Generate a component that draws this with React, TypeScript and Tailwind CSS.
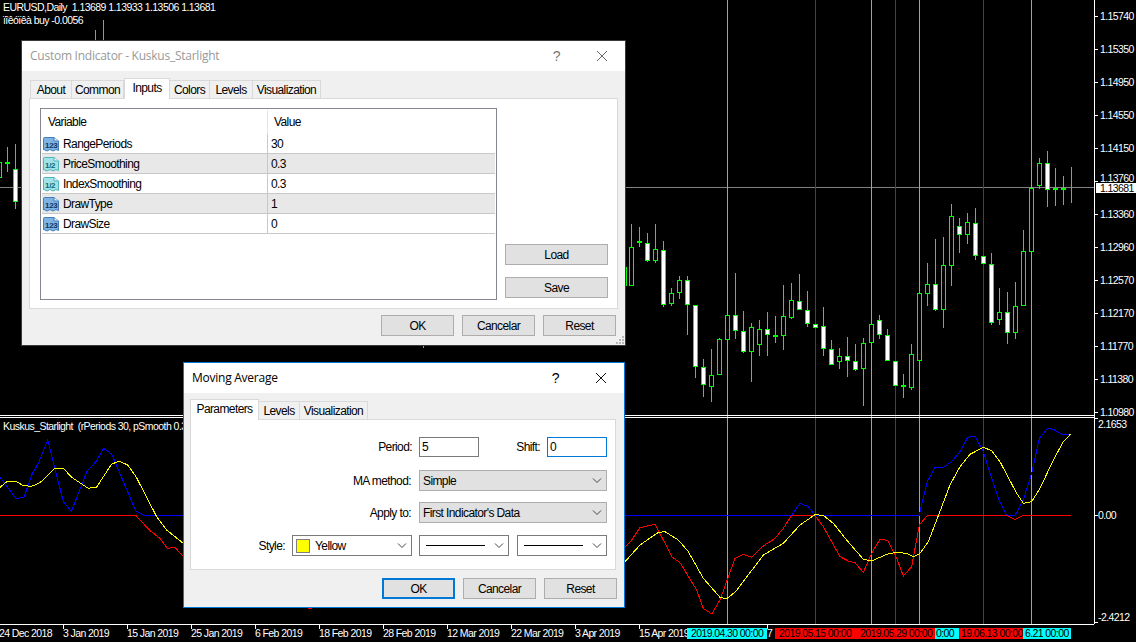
const FONT = "font-['Liberation_Sans',sans-serif]";
const TITLE = "font-['Open_Sans',sans-serif] tracking-[-0.25px]";

// [x, wickTop, wickBottom, bodyTop, bodyBottom, filled] read off the main pane
type Candle = [number, number, number, number, number, boolean];

const raw: [number, number, number, number, number, number][] = [
  [34, 672, 857, 740, 857, 0], [58, 681, 740, 724, 728, 1], [82, 700, 786, 728, 782, 1], [106, 672, 788, 748, 782, 0],
  [130, 723, 920, 751, 914, 1], [154, 865, 917, 880, 911, 0], [178, 828, 896, 841, 880, 0], [202, 828, 1005, 841, 916, 1],
  [226, 916, 1133, 916, 1102, 1], [250, 1078, 1190, 1102, 1156, 1], [274, 1048, 1205, 1126, 1162, 0], [298, 1015, 1124, 1018, 1124, 0],
  [322, 946, 1019, 946, 1019, 0], [346, 820, 1017, 946, 994, 1], [370, 934, 1058, 994, 1055, 1], [394, 969, 1145, 982, 1055, 0],
  [418, 961, 1067, 988, 1034, 0], [442, 937, 1067, 988, 1006, 1], [466, 949, 1029, 1006, 1010, 1], [490, 855, 1049, 949, 1007, 0],
  [514, 850, 956, 901, 953, 0], [538, 823, 929, 904, 929, 1], [562, 874, 980, 931, 973, 1], [586, 973, 983, 973, 983, 1],
  [610, 922, 1067, 979, 1048, 1], [634, 1020, 1096, 1048, 1094, 1], [658, 1044, 1106, 1069, 1085, 0], [682, 1011, 1130, 1069, 1082, 1],
  [706, 1033, 1112, 1084, 1109, 1], [730, 1015, 1217, 1030, 1108, 0], [754, 973, 1028, 973, 1028, 0], [778, 946, 1016, 961, 1006, 1],
  [802, 988, 1084, 1006, 1084, 1], [826, 1084, 1157, 1084, 1157, 1], [850, 1122, 1193, 1156, 1160, 1], [874, 1033, 1169, 1063, 1163, 0],
  [898, 880, 1082, 880, 1082, 0], [922, 790, 918, 853, 881, 0], [946, 717, 934, 853, 931, 1], [970, 712, 983, 796, 931, 0],
  [994, 612, 857, 649, 797, 0], [1018, 655, 758, 679, 706, 1], [1042, 640, 731, 667, 706, 0], [1066, 625, 779, 670, 767, 1],
  [1090, 767, 793, 767, 793, 1], [1114, 760, 976, 793, 970, 1], [1138, 865, 974, 937, 961, 0], [1162, 877, 1031, 937, 1000, 1],
  [1186, 847, 1016, 919, 1000, 0], [1210, 690, 919, 754, 919, 0], [1234, 565, 755, 565, 755, 0], [1258, 474, 568, 490, 559, 0],
  [1282, 454, 622, 490, 571, 1], [1306, 505, 617, 565, 571, 0], [1330, 529, 614, 564, 566, 1], [1354, 502, 608, 563, 564, 1],
];

const candles: Candle[] = [
  ...raw.map((c): Candle => [Math.round(620 + c[0] / 3), Math.round(c[1] / 3), Math.round(c[2] / 3), Math.round(c[3] / 3), Math.round(c[4] / 3), c[5] === 1]),
  [-1, 150, 180, 162, 178, false],
  [7, 147, 172, 162, 163, true],
  [15, 144, 209, 169, 202, true],
  [95, 30, 42, 30, 30, true],
  [103, 20, 42, 20, 20, true],
  [21, 137, 202, 137, 137, true],
  [423, 344, 348, 344, 344, true],
  [626, 267, 286, 267, 267, true],
];

const toRight = (pts: number[][]) => pts.map(([x, y]) => `${620 + x / 3},${410 + y / 3}`).join(" ");
const toLeft = (pts: number[][]) => pts.map(([x, y]) => `${x / 3},${340 + y / 3}`).join(" ");

const yellowL = toLeft([[0, 442], [22, 424], [48, 424], [70, 437], [95, 439], [120, 428], [165, 385], [190, 385], [215, 412], [265, 445], [290, 441], [335, 372], [358, 364], [383, 375], [407, 408], [470, 530], [500, 570], [550, 610]]);
const blueL = toLeft([[0, 412], [48, 475], [72, 472], [95, 405], [115, 370], [143, 300], [190, 485], [214, 514], [262, 392], [288, 365], [311, 325], [335, 342], [407, 512], [430, 525], [550, 525]]);
const redL = toLeft([[0, 526], [407, 526], [450, 572], [480, 595], [502, 625], [525, 622], [550, 650]]);
const yellowR = toRight([[15, 455], [60, 405], [115, 367], [135, 365], [175, 390], [205, 425], [250, 505], [300, 562], [320, 566], [347, 545], [430, 435], [490, 400], [540, 345], [585, 314], [610, 316], [640, 340], [680, 390], [730, 448], [755, 453], [800, 433], [830, 427], [860, 430], [880, 440], [900, 430], [925, 395], [950, 330], [990, 225], [1020, 170], [1050, 133], [1090, 112], [1115, 122], [1140, 155], [1190, 250], [1210, 280], [1235, 275], [1260, 235], [1300, 150], [1330, 95], [1352, 72]]);
const redR = toRight([[15, 412], [35, 390], [60, 353], [105, 343], [130, 390], [155, 440], [180, 458], [230, 540], [250, 595], [275, 612], [300, 570], [345, 445], [370, 433], [395, 442], [430, 408], [465, 385], [490, 355], [515, 316], [585, 316], [610, 350], [635, 395], [660, 440], [685, 453], [705, 458], [730, 487], [755, 430], [780, 387], [803, 392], [830, 445], [850, 498], [875, 470], [898, 345], [922, 316], [1160, 316], [1185, 328], [1210, 316], [1352, 316]]);
const blueR = toRight([[15, 316], [515, 316], [540, 280], [565, 290], [585, 316], [898, 316], [900, 305], [922, 215], [945, 172], [970, 172], [995, 155], [1020, 125], [1043, 82], [1065, 78], [1090, 125], [1110, 190], [1135, 265], [1160, 316], [1185, 316], [1210, 270], [1235, 190], [1258, 85], [1283, 55], [1300, 58], [1330, 75], [1352, 72]]);

const prices = [["1.15740", 16], ["1.15350", 49], ["1.14950", 82], ["1.14550", 115], ["1.14150", 148], ["1.13360", 214], ["1.12960", 247], ["1.12570", 280], ["1.12170", 313], ["1.11770", 346], ["1.11380", 379], ["1.10980", 412]] as const;
const dates = ["24 Dec 2018", "3 Jan 2019", "15 Jan 2019", "25 Jan 2019", "6 Feb 2019", "18 Feb 2019", "28 Feb 2019", "12 Mar 2019", "22 Mar 2019", "3 Apr 2019", "15 Apr 2019"];
const vlines = [[727, "#00e5e5"], [815, "#e00000"], [871, "#00e5e5"], [895, "#e00000"], [919, "#00e5e5"], [983, "#e00000"], [1031, "#00e5e5"]] as const;

function Chart() {
  return (
    <svg width="1136" height="642" className="absolute inset-0" fontFamily="Liberation Sans, sans-serif" fontSize="10.5" letterSpacing="-0.6">
      <line x1="0" x2="1094" y1="187.5" y2="187.5" stroke="#808080" />
      {vlines.map(([x, c]) => (
        <line key={x} x1={x + 0.5} x2={x + 0.5} y1="0" y2="624" stroke={c} />
      ))}
      {candles.map(([x, wt, wb, bt, bb, filled]) => (
        <g key={x}>
          <line x1={x + 0.5} x2={x + 0.5} y1={wt} y2={wb} stroke="#00ff00" />
          {bb > bt && (
            <rect x={x - 1.5} y={bt + 0.5} width="4" height={Math.max(bb - bt - 1, 1)} fill={filled ? "#fff" : "#000"} stroke="#00ff00" />
          )}
        </g>
      ))}
      <line x1="0" x2="1094" y1="415.5" y2="415.5" stroke="#fff" />
      <line x1="0" x2="1094" y1="417.5" y2="417.5" stroke="#fff" />
      <g shapeRendering="crispEdges" fill="none">
        <polyline points={blueL} stroke="#0000ff" />
        <polyline points={redL} stroke="#ff0000" />
        <polyline points={yellowL} stroke="#ffff00" />
        <polyline points={blueR} stroke="#0000ff" />
        <polyline points={redR} stroke="#ff0000" />
        <polyline points={yellowR} stroke="#ffff00" />
        <polyline points="308,608 312,608" stroke="#ff0000" />
      </g>
      <line x1="1094.5" x2="1094.5" y1="0" y2="624" stroke="#fff" />
      <line x1="0" x2="1094" y1="624.5" y2="624.5" stroke="#fff" />
      {prices.map(([p, y]) => (
        <g key={p}>
          <line x1="1095" x2="1098" y1={y + 0.5} y2={y + 0.5} stroke="#fff" />
          <text x="1100" y={y + 4} fill="#fff">{p}</text>
        </g>
      ))}
      <line x1="1095" x2="1098" y1="181.5" y2="181.5" stroke="#fff" />
      <text x="1100" y="182" fill="#fff">1.13760</text>
      <rect x="1096" y="183" width="40" height="10" fill="#fff" />
      <text x="1100" y="191.5" fill="#000">1.13681</text>
      <text x="1098" y="428" fill="#fff">2.1653</text>
      <line x1="1095" x2="1098" y1="515.5" y2="515.5" stroke="#fff" />
      <text x="1098" y="519" fill="#fff">0.00</text>
      <line x1="1095" x2="1098" y1="418.5" y2="418.5" stroke="#fff" />
      <line x1="1095" x2="1098" y1="622.5" y2="622.5" stroke="#fff" />
      <text x="1098" y="621" fill="#fff">-2.4212</text>
      {dates.map((d, i) => (
        <g key={d}>
          <line x1={63.5 + 64 * (i - 1)} x2={63.5 + 64 * (i - 1)} y1="625" y2="629" stroke="#fff" />
          <text x={63 + 64 * (i - 1)} y="637" fill="#fff">{d}</text>
        </g>
      ))}
      <line x1="767.5" x2="767.5" y1="625" y2="629" stroke="#fff" />
      <text x="767" y="637" fill="#fff">7</text>
      <rect x="687" y="628" width="80" height="11" fill="#00ffff" />
      <text x="691" y="637" fill="#000">2019.04.30 00:00</text>
      <rect x="775" y="628" width="160" height="11" fill="#ff0000" />
      <text x="779" y="637" fill="#000">2019.05.15 00:00</text>
      <text x="860" y="637" fill="#000">2019.05.29 00:00</text>
      <rect x="935" y="628" width="24" height="11" fill="#00ffff" />
      <text x="936" y="637" fill="#000">0:00</text>
      <rect x="959" y="628" width="64" height="11" fill="#ff0000" />
      <text x="961" y="637" fill="#000">19.06.13 00:00</text>
      <rect x="1023" y="628" width="48" height="11" fill="#00ffff" />
      <text x="1025" y="637" fill="#000">6.21 00:00</text>
    </svg>
  );
}

function TypeIcon({ label, light }: { label: string; light?: boolean }) {
  const fill = light ? "#9fe3e6" : "#7fb2e0";
  const edge = light ? "#4fb3bd" : "#3f7fbf";
  return (
    <svg width="16" height="16" viewBox="0 0 16 16" className="shrink-0">
      <path d="M.5 2.5Q.5 1.5 1.5 1.5H11L15.5 5V14.5L13 13.5 10 15 7 13.5 4 15 1 13.5.5 14Z" fill={fill} stroke={edge} />
      <path d="M11 1.5V5H15.5" fill="#e8f4fb" stroke={edge} />
      <text x="2" y="11.5" fontSize="8" fontWeight="700" letterSpacing="-0.3" fontFamily="Liberation Sans, sans-serif" fill={light ? "#17666e" : "#0f3560"}>{label}</text>
    </svg>
  );
}

function Btn({ children, primary, className = "" }: { children: string; primary?: boolean; className?: string }) {
  return (
    <div className={`flex h-[21px] items-center justify-center bg-[#e1e1e1] text-black ${primary ? "border-2 border-[#0078d7]" : "border border-[#adadad]"} ${className}`}>
      {children}
    </div>
  );
}

function Tabs({ items, active }: { items: [string, number][]; active: string }) {
  return (
    <div className="relative z-10 flex h-[19px] items-end">
      {items.map(([t, w]) =>
        t === active ? (
          <div key={t} style={{ width: w }} className="-mb-px flex h-[21px] items-center justify-center border border-b-0 border-[#d9d9d9] bg-white pb-[3px] text-black">{t}</div>
        ) : (
          <div key={t} style={{ width: w }} className="flex h-[18px] items-center justify-center border border-b-0 border-l-0 border-[#d9d9d9] bg-[#f0f0f0] text-black first:border-l">{t}</div>
        ),
      )}
    </div>
  );
}

function TitleBar({ title, dim }: { title: string; dim?: boolean }) {
  return (
    <div className="flex h-[30px] shrink-0 items-center bg-white pl-2">
      <span className={`flex-1 text-[12px] ${TITLE} ${dim ? "text-[#999999]" : "text-black"}`}>{title}</span>
      <span className={`mr-[36px] text-[14px] ${dim ? "text-[#777777]" : "text-black"}`}>?</span>
      <svg width="12" height="12" viewBox="0 0 12 12" className="mr-[17px]" stroke={dim ? "#666666" : "#111111"} fill="none">
        <path d="M1 1 11 11M11 1 1 11" />
      </svg>
    </div>
  );
}

const rows = [
  ["RangePeriods", "30", "123", false],
  ["PriceSmoothing", "0.3", "1/2", true],
  ["IndexSmoothing", "0.3", "1/2", false],
  ["DrawType", "1", "123", true],
  ["DrawSize", "0", "123", false],
] as const;

function CustomIndicator() {
  return (
    <div className="absolute left-[21px] top-[40px] flex h-[306px] w-[605px] flex-col border border-[#3a3a3a] bg-[#f0f0f0] text-[12px] tracking-[-0.6px]">
      <TitleBar title="Custom Indicator - Kuskus_Starlight" dim />
      <div className="mt-[8px] pl-[8px]">
        <Tabs active="Inputs" items={[["About", 42], ["Common", 52], ["Inputs", 46], ["Colors", 40], ["Levels", 43], ["Visualization", 68]]} />
      </div>
      <div className="mx-[7px] flex h-[211px] gap-[8px] border border-[#d9d9d9] bg-white pl-[10px] pt-[9px]">
        <div className="h-[192px] w-[457px] border border-[#828790] bg-white p-px">
          <div className="flex h-[24px] items-center">
            <span className="w-[225px] pl-[6px]">Variable</span>
            <span className="h-full w-px bg-[#e5e5e5]" />
            <span className="pl-[6px]">Value</span>
          </div>
          {rows.map(([name, value, kind, shaded]) => (
            <div key={name} className={`flex h-[20px] items-center border-b border-[#c8c8c8] ${shaded ? "bg-[#e8e8e8]" : "bg-white"}`}>
              <div className="flex h-full w-[225px] items-center gap-[4px] pl-[1px]">
                <TypeIcon label={kind} light={kind !== "123"} />
                <span>{name}</span>
              </div>
              <span className="h-full w-px bg-[#c8c8c8]" />
              <span className="pl-[3px]">{value}</span>
            </div>
          ))}
        </div>
        <div className="flex flex-col gap-[12px] pt-[136px]">
          <Btn className="w-[103px]">Load</Btn>
          <Btn className="w-[103px]">Save</Btn>
        </div>
      </div>
      <div className="mr-[9px] mt-[6px] flex justify-end gap-[8px]">
        <Btn className="w-[73px]">OK</Btn>
        <Btn className="w-[73px]">Cancelar</Btn>
        <Btn className="w-[73px]">Reset</Btn>
      </div>
      <div className="absolute bottom-[1px] right-[1px] grid grid-cols-3 gap-px">
        {[0, 1, 2, 3, 4, 5, 6, 7, 8].map((i) => (
          <span key={i} className={`h-[2px] w-[2px] ${[0, 1, 3].includes(i) ? "" : "bg-[#b8b8b8]"}`} />
        ))}
      </div>
    </div>
  );
}

function Chevron() {
  return (
    <svg width="10" height="6" viewBox="0 0 10 6" fill="none" stroke="#444444" className="shrink-0">
      <path d="M1 .5 5 4.5 9 .5" />
    </svg>
  );
}

function Select({ label, className }: { label: string; className: string }) {
  return (
    <div className={`flex h-[21px] items-center justify-between border border-[#adadad] bg-[#e1e1e1] pl-[3px] pr-[4px] ${className}`}>
      <span>{label}</span>
      <Chevron />
    </div>
  );
}

function LineSelect() {
  return (
    <div className="flex h-[21px] w-[90px] items-center justify-between border border-[#7a7a7a] bg-white pl-[6px] pr-[4px]">
      <span className="h-px w-[59px] bg-black" />
      <Chevron />
    </div>
  );
}

function MovingAverage() {
  return (
    <div className="absolute left-[183px] top-[362px] flex h-[246px] w-[442px] flex-col border border-[#0078d7] bg-[#f0f0f0] text-[12px] tracking-[-0.6px]">
      <TitleBar title="Moving Average" />
      <div className="mt-[7px] pl-[6px]">
        <Tabs active="Parameters" items={[["Parameters", 69], ["Levels", 41], ["Visualization", 68]]} />
      </div>
      <div className="ml-[6px] mr-[8px] flex h-[151px] flex-col items-end border border-[#d9d9d9] bg-white pr-[8px] pt-[17px]">
        <div className="flex items-center">
          <span className="mr-[7px]">Period:</span>
          <div className="flex h-[20px] w-[60px] items-center border border-[#7a7a7a] pl-[2px]">5</div>
          <span className="w-[68px] pr-[7px] text-right">Shift:</span>
          <div className="flex h-[20px] w-[60px] items-center border border-[#0078d7] pl-[2px]">0</div>
        </div>
        <div className="mt-[13px] flex items-center">
          <span className="mr-[8px]">MA method:</span>
          <Select label="Simple" className="w-[188px]" />
        </div>
        <div className="mt-[11px] flex items-center">
          <span className="mr-[8px]">Apply to:</span>
          <Select label="First Indicator's Data" className="w-[188px]" />
        </div>
        <div className="mt-[12px] flex items-center">
          <span className="mr-[7px]">Style:</span>
          <div className="flex h-[21px] w-[120px] items-center justify-between border border-[#7a7a7a] bg-white pl-[3px] pr-[4px]">
            <span className="flex items-center gap-[5px]">
              <span className="h-[14px] w-[14px] border border-[#808080] bg-[#ffff00]" />
              Yellow
            </span>
            <Chevron />
          </div>
          <div className="ml-[7px]"><LineSelect /></div>
          <div className="ml-[8px]"><LineSelect /></div>
        </div>
      </div>
      <div className="mr-[7px] mt-[8px] flex justify-end gap-[8px]">
        <Btn primary className="w-[73px]">OK</Btn>
        <Btn className="w-[73px]">Cancelar</Btn>
        <Btn className="w-[73px]">Reset</Btn>
      </div>
    </div>
  );
}

export default function App() {
  return (
    <div className={`relative h-[642px] w-[1136px] overflow-hidden bg-black ${FONT}`}>
      <Chart />
      <div className="absolute left-[3px] top-[1px] whitespace-pre text-[10.5px] leading-[13px] tracking-[-0.55px] text-white">EURUSD,Daily  1.13689 1.13933 1.13506 1.13681</div>
      <div className="absolute left-[3px] top-[14px] whitespace-pre text-[10.5px] leading-[13px] tracking-[-0.55px] text-white">ïîêóïêà buy -0.0056</div>
      <div className="absolute left-[3px] top-[420px] whitespace-pre text-[10.5px] leading-[13px] tracking-[-0.55px] text-white">Kuskus_Starlight  (rPeriods 30, pSmooth 0.3</div>
      <CustomIndicator />
      <MovingAverage />
    </div>
  );
}
